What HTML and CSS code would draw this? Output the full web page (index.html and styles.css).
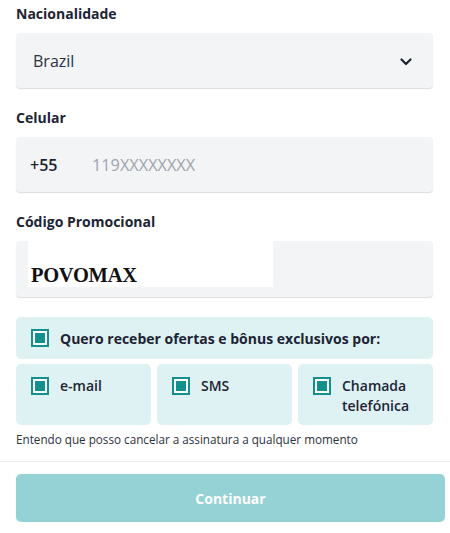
FILE: index.html
```html
<!DOCTYPE html>
<html lang="pt">
<head>
	<meta charset="UTF-8">
	<meta name="viewport" content="width=device-width, initial-scale=1.0">
	<title>Cadastro</title>
	<link rel="stylesheet" href="styles.css">
</head>
<body>
	<div class="form">
		<div class="field">
			<label class="label">Nacionalidade</label>
			<div class="box select">
				<span class="value">Brazil</span>
				<svg class="chevron" width="12" height="8" viewBox="0 0 12 8">
					<path d="M1.5 1.5 L6 6 L10.5 1.5" fill="none" stroke="#1f2533" stroke-width="2.2" stroke-linecap="round" stroke-linejoin="round"/>
				</svg>
			</div>
		</div>

		<div class="field">
			<label class="label">Celular</label>
			<div class="box phone">
				<span class="prefix">+55</span>
				<span class="placeholder">119XXXXXXXX</span>
			</div>
		</div>

		<div class="field">
			<label class="label">Código Promocional</label>
			<div class="box promo">
				<div class="promo-code">POVOMAX</div>
			</div>
		</div>

		<div class="optin">
			<span class="check"><span class="mark"></span></span>
			<span class="optin-text">Quero receber ofertas e bônus exclusivos por:</span>
		</div>

		<div class="channels">
			<div class="channel">
				<span class="check"><span class="mark"></span></span>
				<span class="channel-text">e-mail</span>
			</div>
			<div class="channel">
				<span class="check"><span class="mark"></span></span>
				<span class="channel-text">SMS</span>
			</div>
			<div class="channel">
				<span class="check"><span class="mark"></span></span>
				<span class="channel-text">Chamada telefónica</span>
			</div>
		</div>

		<p class="note">Entendo que posso cancelar a assinatura a qualquer momento</p>
	</div>

	<div class="footer">
		<button class="continue">Continuar</button>
	</div>
</body>
</html>
```

FILE: styles.css
```css
:root {
	--text-color:		#1c2434;
	--field-bg:		#f3f4f6;
	--teal:			#13908e;
	--teal-bg:		#def1f3;
	--button-bg:		#94d2d5;
}

* {
	padding:		0;
	margin:			0;
	box-sizing:		border-box;
}

body {
	background:		white;
	font-family:		"Open Sans", "Noto Sans", sans-serif;
	color:			var(--text-color);
}

.form {
	padding:		4px 17px 0 16px;
}

.field {
	margin-bottom:		20px;
}

.label {
	display:		block;
	font-size:		14px;
	line-height:		20px;
	font-weight:		700;
	margin-bottom:		9px;
}

.box {
	height:			55px;
	background:		var(--field-bg);
	border-radius:		4px;
	box-shadow:		0 1px 1px rgba(0, 0, 0, 0.14);
	display:		flex;
	align-items:		center;
}

.select {
	padding:		0 21px 0 17px;
	justify-content:	space-between;
}

.value {
	font-size:		16px;
	color:			#2b3240;
}

.chevron {
	margin-top:		2px;
}

.phone {
	padding-left:		14px;
	font-size:		16px;
}

.prefix {
	font-weight:		600;
	width:			62px;
}

.placeholder {
	color:			#a0a4ab;
	font-size:		16.3px;
}

.promo {
	align-items:		flex-start;
	padding-left:		12px;
	height:			56px;
}

.promo-code {
	background:		white;
	width:			245px;
	height:			46px;
	padding:		22px 0 0 3px;
	font-family:		"Liberation Serif", serif;
	font-weight:		700;
	font-size:		20.5px;
	line-height:		24px;
	color:			#111;
	letter-spacing:		-0.3px;
}

.check {
	flex:			none;
	width:			18px;
	height:			18px;
	border:			2px solid var(--teal);
	background:		white;
	padding:		2px;
}

.mark {
	display:		block;
	width:			100%;
	height:			100%;
	background:		var(--teal);
}

.optin {
	background:		var(--teal-bg);
	border-radius:		5px;
	height:			42px;
	display:		flex;
	align-items:		center;
	gap:			11px;
	padding-left:		15px;
}

.optin-text {
	font-size:		14px;
	font-weight:		700;
}

.channels {
	margin-top:		5px;
	display:		grid;
	grid-template-columns:	1fr 1fr 1fr;
	gap:			6px;
}

.channel {
	background:		var(--teal-bg);
	border-radius:		5px;
	height:			61px;
	display:		flex;
	align-items:		flex-start;
	gap:			11px;
	padding:		13px 8px 0 15px;
}

.channel-text {
	font-size:		14px;
	font-weight:		600;
	line-height:		20px;
	margin-top:		-1px;
}

.note {
	font-size:		11.7px;
	line-height:		16px;
	margin-top:		6px;
	color:			#2b3240;
}

.footer {
	margin-top:		14px;
	border-top:		1px solid #ececec;
	padding:		12px 5px 0 16px;
}

.continue {
	width:			100%;
	height:			48px;
	border:			none;
	border-radius:		5px;
	background:		var(--button-bg);
	color:			white;
	font-family:		"Open Sans", sans-serif;
	font-size:		14px;
	font-weight:		700;
	cursor:			pointer;
}
```
